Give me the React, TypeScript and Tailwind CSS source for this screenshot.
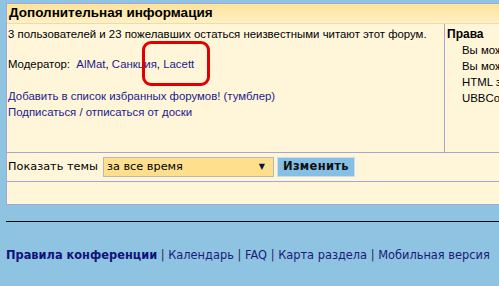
import React from 'react';

const sans = { fontFamily: '"Liberation Sans", Arial, sans-serif' };
const verdana = { fontFamily: '"DejaVu Sans", Verdana, sans-serif' };

const rights = ['Вы можете', 'Вы можете', 'HTML запрещён', 'UBBCode разрешён'];

export default function App() {
  return (
    <div className="relative w-[499px] h-[286px] overflow-hidden bg-[#8ec3e1] pt-[3px] pl-[6px]" style={sans}>
      {/* main panel */}
      <div className="w-[520px] border border-[#a6a6d2] bg-[#fff6da]">
        <div className="h-[19px] flex items-center pl-[2px] text-[13.5px] font-bold text-black bg-gradient-to-b from-[#fde39a] to-[#fff0c4]">
          Дополнительная информация
        </div>
        <div className="flex h-[129px] border-t border-[#e8dcb0]">
          <div className="w-[437px] shrink-0 pl-[1px] text-[11.4px] text-black leading-[16px]">
            <div className="mt-[2px] whitespace-nowrap">3 пользователей и 23 пожелавших остаться неизвестными читают этот форум.</div>
            <div className="mt-[14px] whitespace-nowrap">
              Модератор:&nbsp; <span className="text-[#1a1a8a]">AlMat</span>, <span className="text-[#1a1a8a]">Санкция</span>, <span className="text-[#1a1a8a]">Lacett</span>
            </div>
            <div className="mt-[16px] whitespace-nowrap text-[#1a1a8a]">Добавить в список избранных форумов! (тумблер)</div>
            <div className="whitespace-nowrap text-[#1a1a8a]">Подписаться / отписаться от доски</div>
          </div>
          <div className="flex-1 border-l border-[#a6a6d2] pl-[2px] text-[11.4px] leading-[16px] text-black">
            <div className="mt-[2px] font-bold text-[12px]">Права</div>
            {rights.map((r, i) => (
              <div key={i} className="pl-[15px] whitespace-nowrap">{r}</div>
            ))}
          </div>
        </div>
        <div className="h-[29px] flex items-center border-t border-[#a6a6d2] pl-[1px] text-[11.3px]" style={verdana}>
          <span className="text-black">Показать темы</span>
          <div className="ml-[5px] w-[171px] h-[20px] border border-[#b8b8b8] bg-[#fedf8e] flex items-center justify-between pl-[3px] pr-[8px]">
            <span>за все время</span>
            <span className="text-[8px] text-[#101040]">▼</span>
          </div>
          <div className="ml-[3px] w-[78px] h-[20px] border border-[#c8dcec] bg-[#86bfe4] flex items-center justify-center font-bold text-[11.5px] tracking-[0.3px] text-[#101010]">
            Изменить
          </div>
        </div>
        <div className="h-[23px] border-t border-[#a6a6d2]" />
      </div>

      <div className="mt-[16px] h-[1px] bg-black" />

      <div className="mt-[25px] whitespace-nowrap text-[11.4px] text-[#1a1a7a]" style={verdana}>
        <span className="font-bold text-[#12127a]">Правила конференции</span>
        <span className="text-[#26265a]"> | </span>Календарь
        <span className="text-[#26265a]"> | </span>FAQ
        <span className="text-[#26265a]"> | </span>Карта раздела
        <span className="text-[#26265a]"> | </span>Мобильная версия
      </div>

      {/* red highlight annotation */}
      <div className="absolute left-[142px] top-[41px] w-[68px] h-[45px] border-[3px] border-[#e00000] rounded-[9px]" />
    </div>
  );
}
